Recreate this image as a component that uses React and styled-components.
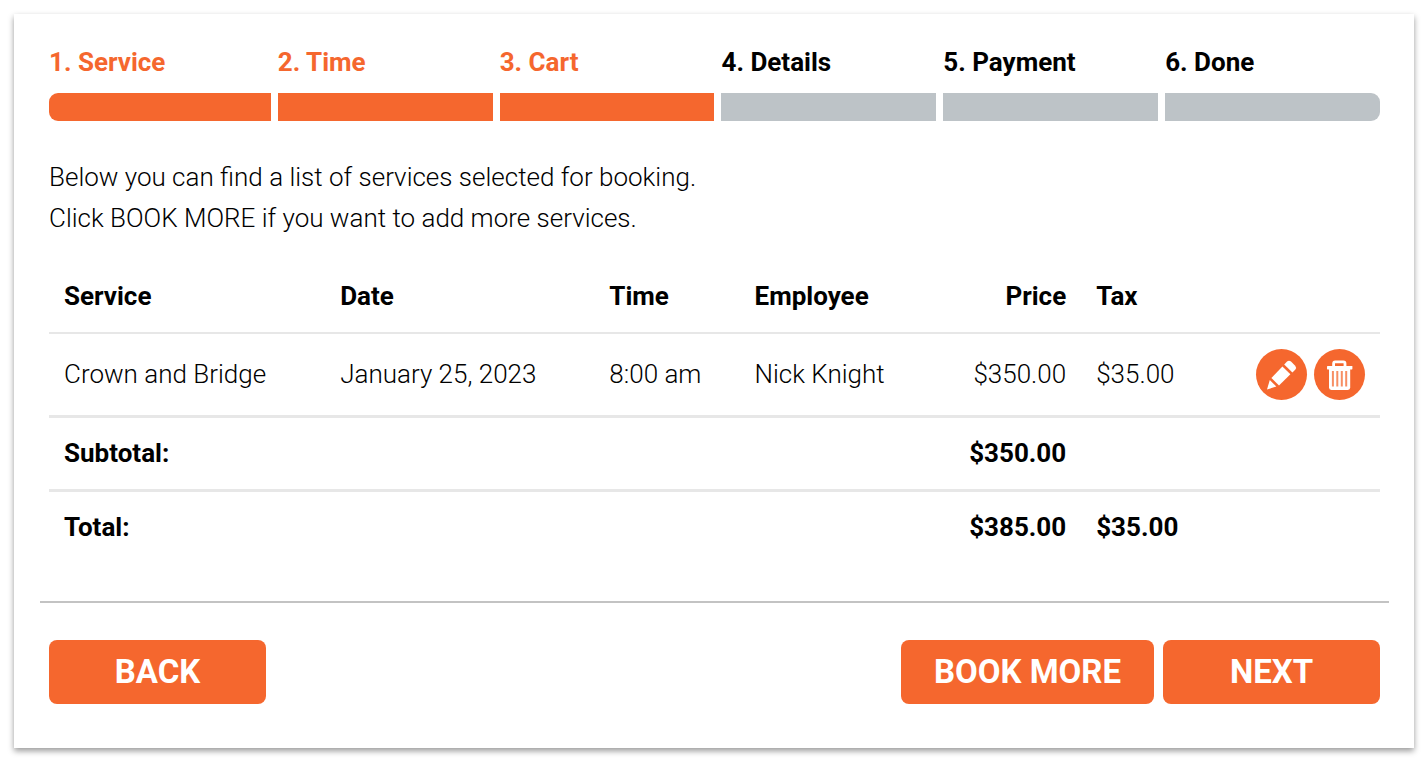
import styled, { createGlobalStyle } from "styled-components";

const steps = [
  { label: "1. Service", done: true },
  { label: "2. Time", done: true },
  { label: "3. Cart", done: true },
  { label: "4. Details", done: false },
  { label: "5. Payment", done: false },
  { label: "6. Done", done: false },
];

const items = [
  {
    service: "Crown and Bridge",
    date: "January 25, 2023",
    time: "8:00 am",
    employee: "Nick Knight",
    price: "$350.00",
    tax: "$35.00",
  },
];

function PencilIcon() {
  return (
    <svg width="51" height="51" viewBox="0 0 51 51" fill="#fff" aria-hidden="true">
      <path d="M11 40.5 L13.8 31 L20.3 37.6 Z" />
      <path d="M15.4 29 L26.4 17.4 L34.4 25.2 L23 36.6 Z" />
      <path d="M28.2 15.6 L31 12.6 Q33 10.8 35 12.6 L39.2 16.8 Q41 18.8 39.2 20.8 L36.4 23.4 Z" />
    </svg>
  );
}

function TrashIcon() {
  return (
    <svg width="51" height="51" viewBox="0 0 51 51" fill="#fff" aria-hidden="true">
      <path
        d="M19.6 17.5 V14.4 Q19.6 12.8 21.2 12.8 H29.4 Q31 12.8 31 14.4 V17.5"
        fill="none"
        stroke="#fff"
        strokeWidth="2.8"
      />
      <rect x="13" y="17" width="25.4" height="3.4" rx="0.6" />
      <path d="M15 20 H36.2 V38.6 Q36.2 41 33.8 41 H17.4 Q15 41 15 38.6 Z" />
      <path
        d="M18.9 22 V37.4 M23.3 22 V37.4 M27.8 22 V37.4 M32.2 22 V37.4"
        stroke="#f78e63"
        strokeWidth="2"
      />
    </svg>
  );
}

export default function App() {
  return (
    <>
      <GlobalStyle />
      <Card>
        <Steps>
          {steps.map((step) => (
            <Step key={step.label} $done={step.done}>
              {step.label}
              <StepBar $done={step.done} />
            </Step>
          ))}
        </Steps>
        <Intro>
          Below you can find a list of services selected for booking.
          <br />
          Click BOOK MORE if you want to add more services.
        </Intro>
        <CartTable>
          <thead>
            <tr>
              <HeadCell>Service</HeadCell>
              <HeadCell>Date</HeadCell>
              <HeadCell>Time</HeadCell>
              <HeadCell>Employee</HeadCell>
              <HeadCell $align="right">Price</HeadCell>
              <HeadCell>Tax</HeadCell>
              <HeadCell as="td" />
            </tr>
          </thead>
          <tbody>
            {items.map((item) => (
              <tr key={item.service}>
                <Cell>{item.service}</Cell>
                <Cell>{item.date}</Cell>
                <Cell>{item.time}</Cell>
                <Cell>{item.employee}</Cell>
                <Cell $align="right">{item.price}</Cell>
                <Cell>{item.tax}</Cell>
                <Cell>
                  <Actions>
                    <RoundButton type="button" aria-label="Edit">
                      <PencilIcon />
                    </RoundButton>
                    <RoundButton type="button" aria-label="Delete">
                      <TrashIcon />
                    </RoundButton>
                  </Actions>
                </Cell>
              </tr>
            ))}
          </tbody>
          <tfoot>
            <tr>
              <SumCell as="th" colSpan={4} scope="row">
                Subtotal:
              </SumCell>
              <SumCell $align="right">$350.00</SumCell>
              <SumCell />
              <SumCell />
            </tr>
            <tr>
              <SumCell as="th" colSpan={4} scope="row">
                Total:
              </SumCell>
              <SumCell $align="right">$385.00</SumCell>
              <SumCell>$35.00</SumCell>
              <SumCell />
            </tr>
          </tfoot>
        </CartTable>
        <Footer>
          <NavButton type="button">BACK</NavButton>
          <ButtonGroup>
            <NavButton type="button">BOOK MORE</NavButton>
            <NavButton type="button">NEXT</NavButton>
          </ButtonGroup>
        </Footer>
      </Card>
    </>
  );
}

const GlobalStyle = createGlobalStyle`
  * {
    box-sizing: border-box;
  }

  body {
    margin: 0;
    background-color: #fff;
    color: #000;
    font-family: Roboto, sans-serif;
    font-size: 26px;
    font-weight: 300;
    line-height: 41px;
  }
`;

const Card = styled.main`
  margin: 14px;
  padding: 28px 34px 44px 35px;
  background-color: #fff;
  box-shadow: 0 3px 6px rgba(0, 0, 0, 0.4);
`;

const Steps = styled.ol`
  display: grid;
  grid-template-columns: repeat(6, 1fr);
  margin: 0;
  padding: 0;
  list-style: none;
`;

const Step = styled.li`
  padding-left: 7px;
  color: ${({ $done }) => ($done ? "#f5672e" : "#000")};
  font-weight: 700;

  &:first-child {
    padding-left: 0;
  }
`;

const StepBar = styled.div`
  height: 28px;
  margin-top: 10px;
  background-color: ${({ $done }) => ($done ? "#f5672e" : "#bdc3c7")};

  ${Step}:first-child & {
    border-radius: 9px 0 0 9px;
  }

  ${Step}:last-child & {
    border-radius: 0 9px 9px 0;
  }
`;

const Intro = styled.p`
  margin: 36px 0 22px;
`;

const CartTable = styled.table`
  width: 100%;
  border-collapse: separate;
  border-spacing: 0;
`;

const HeadCell = styled.th`
  padding: 15px;
  border-bottom: 2px solid #e7e7e7;
  font-weight: 700;
  text-align: ${({ $align }) => $align || "left"};
`;

const Cell = styled.td`
  padding: 15px;
  text-align: ${({ $align }) => $align || "left"};
  white-space: nowrap;
`;

const SumCell = styled.td`
  padding: 15px;
  border-top: 3px solid #e7e7e7;
  font-weight: 700;
  text-align: ${({ $align }) => $align || "left"};
`;

const Actions = styled.div`
  display: flex;
  justify-content: flex-end;
  gap: 7px;
`;

const RoundButton = styled.button`
  display: flex;
  width: 51px;
  height: 51px;
  padding: 0;
  border: none;
  border-radius: 50%;
  background-color: #f5672e;
  cursor: pointer;
`;

const Footer = styled.footer`
  display: flex;
  justify-content: space-between;
  margin: 38px -9px 0;
  padding: 37px 9px 0;
  border-top: 2px solid #c3c3c3;
`;

const ButtonGroup = styled.div`
  display: flex;
  gap: 9px;
`;

const NavButton = styled.button`
  min-width: 217px;
  height: 64px;
  padding: 0 33px 2px;
  border: none;
  border-radius: 8px;
  background-color: #f5672e;
  color: #fff;
  font-family: inherit;
  font-size: 33px;
  font-weight: 700;
  cursor: pointer;
`;
